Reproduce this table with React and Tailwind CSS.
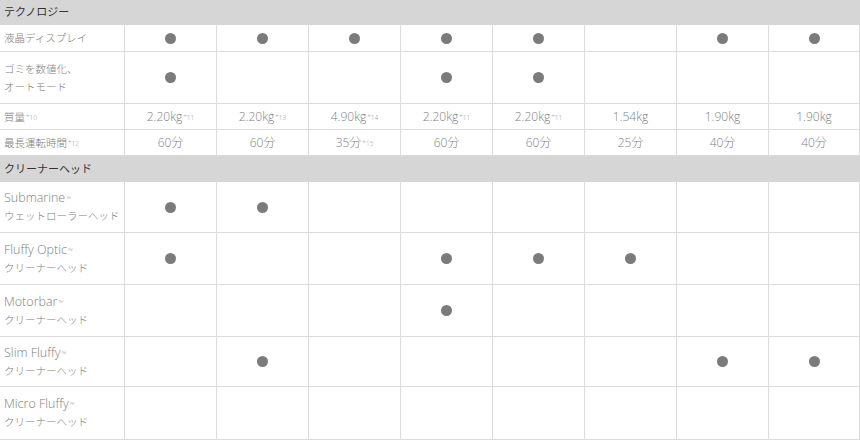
const tech = [
  { label: ["液晶ディスプレイ"], h: "h-[27px]", marks: [1, 1, 1, 1, 1, 0, 1, 1] },
  { label: ["ゴミを数値化、", "オートモード"], h: "h-[52px]", marks: [1, 0, 0, 1, 1, 0, 0, 0] },
];

const weights = [
  ["2.20kg", "*11"], ["2.20kg", "*13"], ["4.90kg", "*14"], ["2.20kg", "*11"],
  ["2.20kg", "*11"], ["1.54kg", ""], ["1.90kg", ""], ["1.90kg", ""],
];

const runtimes = [
  ["60分", ""], ["60分", ""], ["35分", "*15"], ["60分", ""],
  ["60分", ""], ["25分", ""], ["40分", ""], ["40分", ""],
];

const heads = [
  { name: "Submarine", sub: "ウェットローラーヘッド", h: "h-[51px]", marks: [1, 1, 0, 0, 0, 0, 0, 0] },
  { name: "Fluffy Optic", sub: "クリーナーヘッド", h: "h-[52px]", marks: [1, 0, 0, 1, 1, 1, 0, 0] },
  { name: "Motorbar", sub: "クリーナーヘッド", h: "h-[52px]", marks: [0, 0, 0, 1, 0, 0, 0, 0] },
  { name: "Slim Fluffy", sub: "クリーナーヘッド", h: "h-[50px]", marks: [0, 1, 0, 0, 0, 0, 1, 1] },
  { name: "Micro Fluffy", sub: "クリーナーヘッド", h: "h-[53px]", marks: [0, 0, 0, 0, 0, 0, 0, 0] },
];

function Dot() {
  return <span className="block w-[11px] h-[11px] rounded-full bg-[#7b7b7b]" />;
}

function Sup({ children }) {
  return <sup className="text-[6.5px] text-[#999] relative -top-[1px] ml-[1px]">{children}</sup>;
}

function Row({ h, label, cells }) {
  return (
    <div className={`grid grid-cols-[124px_repeat(8,1fr)] border-b border-[#dcdcdc] ${h}`}>
      <div className="flex flex-col justify-center pl-[4px] leading-[18px] whitespace-nowrap">{label}</div>
      {cells.map((c, i) => (
        <div
          key={i}
          className={`flex items-center justify-center border-l border-[#dcdcdc] ${i === 7 ? "border-r" : ""}`}
        >
          {c}
        </div>
      ))}
    </div>
  );
}

export default function App() {
  return (
    <div
      className="w-[860px] h-[441px] bg-white text-[#808080] text-[12px] font-light overflow-hidden"
      style={{ fontFamily: '"Open Sans", "Noto Sans CJK JP", sans-serif' }}
    >
      <div className="h-[25px] bg-[#d6d6d6] flex items-center pl-[4px] text-[#333] text-[11px] font-normal">
        テクノロジー
      </div>
      {tech.map((r, i) => (
        <Row
          key={i}
          h={r.h}
          label={r.label.map((l) => <div key={l} className="text-[10.5px]">{l}</div>)}
          cells={r.marks.map((m) => (m ? <Dot /> : null))}
        />
      ))}
      <Row
        h="h-[26px]"
        label={<div className="text-[10.5px]">質量<Sup>*10</Sup></div>}
        cells={weights.map(([v, s]) => <span>{v}{s && <Sup>{s}</Sup>}</span>)}
      />
      <Row
        h="h-[26px]"
        label={<div className="text-[10.5px]">最長運転時間<Sup>*12</Sup></div>}
        cells={runtimes.map(([v, s]) => <span>{v}{s && <Sup>{s}</Sup>}</span>)}
      />
      <div className="h-[26px] bg-[#d6d6d6] flex items-center pl-[4px] text-[#333] text-[11px] font-normal">
        クリーナーヘッド
      </div>
      {heads.map((r) => (
        <Row
          key={r.name}
          h={r.h}
          label={
            <>
              <div className="text-[12.5px]">{r.name}<Sup>™</Sup></div>
              <div className="text-[10.5px]">{r.sub}</div>
            </>
          }
          cells={r.marks.map((m) => (m ? <Dot /> : null))}
        />
      ))}
    </div>
  );
}
